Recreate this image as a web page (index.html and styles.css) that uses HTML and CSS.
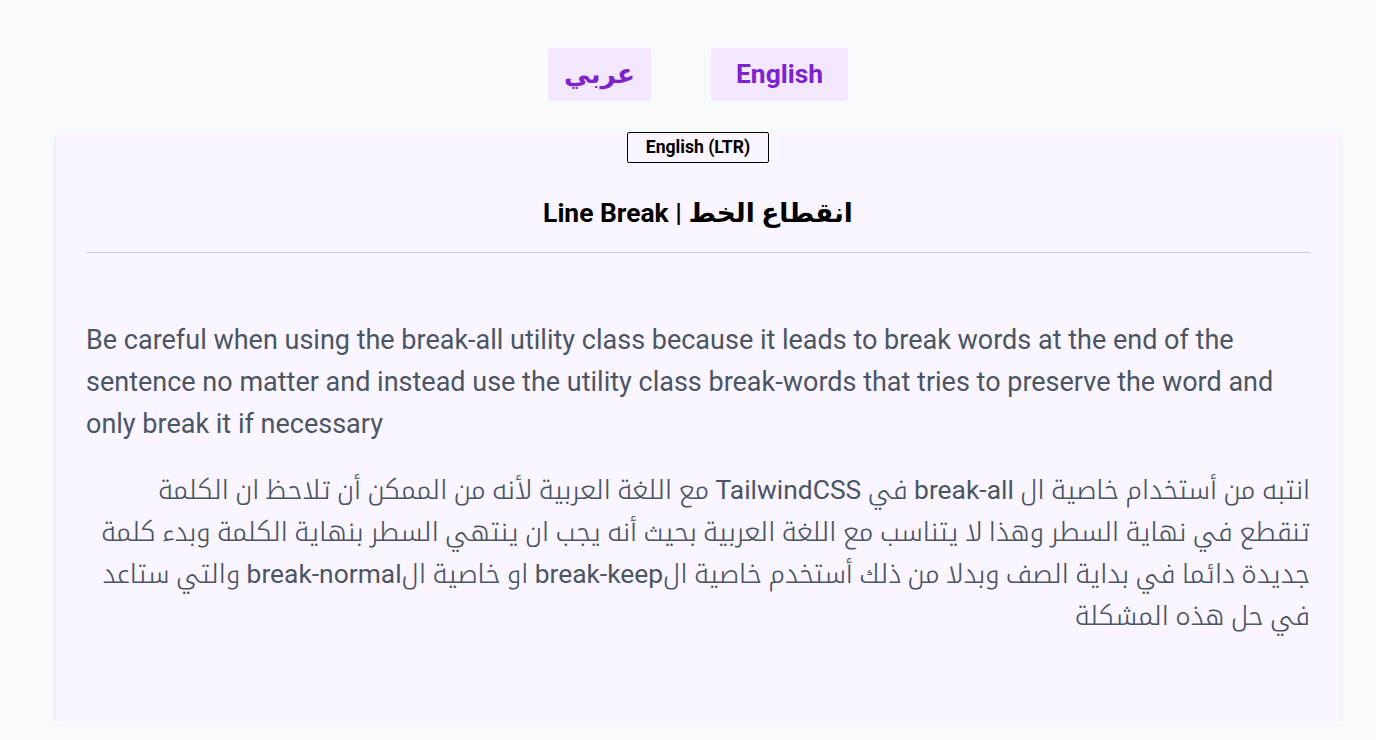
FILE: index.html
```html
<!DOCTYPE html>
<html lang="en">
<head>
    <meta charset="UTF-8">
    <meta name="viewport" content="width=device-width, initial-scale=1.0">
    <title>Line Break</title>
    <link rel="stylesheet" href="styles.css">
</head>
<body>
    <div class="page">
        <nav class="lang-switch">
            <button class="lang-btn lang-btn-ar" lang="ar">عربي</button>
            <button class="lang-btn">English</button>
        </nav>

        <section class="card">
            <div class="badge-row">
                <span class="badge">English (LTR)</span>
            </div>
            <h2 class="card-title">Line Break | انقطاع الخط</h2>
            <hr class="divider">

            <p class="text">Be careful when using the break-all utility class because it leads to break words at the end of the sentence no matter and instead use the utility class break-words that tries to preserve the word and only break it if necessary</p>
            <p class="text text-ar" dir="rtl" lang="ar">انتبه من أستخدام خاصية ال <span class="latin">break-all</span> في <span class="latin">TailwindCSS</span> مع اللغة العربية لأنه من الممكن أن تلاحظ ان الكلمة تنقطع في نهاية السطر وهذا لا يتناسب مع اللغة العربية بحيث أنه يجب ان ينتهي السطر بنهاية الكلمة وبدء كلمة جديدة دائما في بداية الصف وبدلا من ذلك أستخدم خاصية ال<span class="latin">break-keep</span> او خاصية ال<span class="latin">break-normal</span> والتي ستاعد في حل هذه المشكلة</p>
        </section>
    </div>
</body>
</html>
```

FILE: styles.css
```css
body {
    margin: 0;
    font-family: Roboto, 'DejaVu Sans', sans-serif;
    background-color: #f9fafb;
}
.page {
    padding: 48px 36px 0 56px;
}
.lang-switch {
    display: flex;
    justify-content: center;
    gap: 60px;
    margin-bottom: 31px;
}
.lang-btn {
    font-family: inherit;
    font-size: 26.4px;
    font-weight: 700;
    line-height: 35px;
    padding: 9px 25px;
    color: #7e22ce;
    background-color: #f3e8ff;
    border: none;
    border-radius: 3px;
    cursor: pointer;
}
.lang-btn-ar {
    padding: 9px 16px;
}
.card {
    background-color: #faf5ff;
    border-radius: 3px;
    box-shadow: 0 4px 6px -1px rgba(0,0,0,0.1), 0 2px 4px -2px rgba(0,0,0,0.1);
    padding: 0 30px 84px;
}
.badge-row {
    display: flex;
    justify-content: center;
}
.badge {
    font-size: 17.6px;
    font-weight: 700;
    line-height: 25px;
    padding: 2px 18px;
    border: 1px solid #000;
    border-radius: 2px;
    color: #000;
}
.card-title {
    margin: 33px 0 0;
    text-align: center;
    font-size: 26.4px;
    line-height: 35px;
    font-weight: 700;
    color: #000;
}
.divider {
    margin: 21px 0 66px;
    border: none;
    border-top: 1px solid #d1cbd6;
}
.text {
    margin: 0 0 24px;
    font-size: 27px;
    line-height: 42px;
    color: #4b5563;
}
.text-ar {
    margin-bottom: 0;
    font-size: 26.4px;
    font-family: Roboto, 'Noto Kufi Arabic', 'Noto Sans Arabic', 'DejaVu Sans', sans-serif;
    font-weight: 300;
}
.latin {
    font-weight: 400;
}
```
